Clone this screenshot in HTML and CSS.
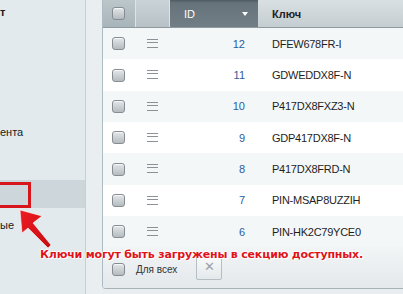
FILE: index.html
```html
<!DOCTYPE html>
<html lang="ru">
<head>
    <meta charset="UTF-8">
    <meta name="viewport" content="width=device-width, initial-scale=1.0">
    <title>Ключи</title>
    <link rel="stylesheet" href="styles.css">
</head>
<body>
    <div class="page">
        <aside class="sidebar">
            <ul class="menu">
                <li class="menu-item first"><b>т</b></li>
                <li class="menu-item"></li>
                <li class="menu-item"></li>
                <li class="menu-item"></li>
                <li class="menu-item">ента</li>
                <li class="menu-item"></li>
                <li class="menu-item active"></li>
                <li class="menu-item">ые</li>
            </ul>
        </aside>
        <div class="gutter"></div>

        <main class="grid">
            <div class="grid-head">
                <div class="col-check"><span class="checkbox"></span></div>
                <div class="col-drag"></div>
                <div class="col-id">ID <span class="sort"></span></div>
                <div class="col-key">Ключ</div>
            </div>

            <div class="grid-body">
                <div class="row odd">
                    <div class="col-check"><span class="checkbox"></span></div>
                    <div class="col-drag"><span class="handle"></span></div>
                    <div class="col-id">12</div>
                    <div class="col-key">DFEW678FR-I</div>
                </div>
                <div class="row">
                    <div class="col-check"><span class="checkbox"></span></div>
                    <div class="col-drag"><span class="handle"></span></div>
                    <div class="col-id">11</div>
                    <div class="col-key">GDWEDDX8F-N</div>
                </div>
                <div class="row odd">
                    <div class="col-check"><span class="checkbox"></span></div>
                    <div class="col-drag"><span class="handle"></span></div>
                    <div class="col-id">10</div>
                    <div class="col-key">P417DX8FXZ3-N</div>
                </div>
                <div class="row">
                    <div class="col-check"><span class="checkbox"></span></div>
                    <div class="col-drag"><span class="handle"></span></div>
                    <div class="col-id">9</div>
                    <div class="col-key">GDP417DX8F-N</div>
                </div>
                <div class="row odd">
                    <div class="col-check"><span class="checkbox"></span></div>
                    <div class="col-drag"><span class="handle"></span></div>
                    <div class="col-id">8</div>
                    <div class="col-key">P417DX8FRD-N</div>
                </div>
                <div class="row">
                    <div class="col-check"><span class="checkbox"></span></div>
                    <div class="col-drag"><span class="handle"></span></div>
                    <div class="col-id">7</div>
                    <div class="col-key">PIN-MSAP8UZZIH</div>
                </div>
                <div class="row odd">
                    <div class="col-check"><span class="checkbox"></span></div>
                    <div class="col-drag"><span class="handle"></span></div>
                    <div class="col-id">6</div>
                    <div class="col-key">PIN-HK2C79YCE0</div>
                </div>
            </div>

            <div class="grid-foot">
                <label class="all"><span class="checkbox"></span>Для всех</label>
                <button class="remove">&#x2715;</button>
            </div>
        </main>
    </div>

    <!-- annotation on top of the screenshot -->
    <div class="callout-box"></div>
    <svg class="callout-arrow" width="60" height="55" viewBox="0 0 60 55">
        <defs>
            <linearGradient id="redGrad" x1="0" y1="0" x2="1" y2="1">
                <stop offset="0" stop-color="#ee1b22"/>
                <stop offset="1" stop-color="#c40d12"/>
            </linearGradient>
        </defs>
        <polygon points="20,10 22,33 28,28 48,48 51,45 33,23 42,16" fill="url(#redGrad)" stroke="rgba(255,255,255,0.7)" stroke-width="0.8" stroke-linejoin="round"/>
    </svg>
    <div class="callout-text">Ключи могут быть загружены в секцию доступных.</div>
</body>
</html>
```

FILE: styles.css
```css
body {
    margin: 0;
    font-family: "Liberation Sans", Arial, sans-serif;
    font-size: 11px;
    color: #222;
    background: #e8eef0;
    overflow: hidden;
}

.page {
    display: flex;
    height: 294px;
}

/* left navigation */
.sidebar {
    width: 85px;
    background: #e2eaed;
    border-right: 1px solid #c4d0d5;
    overflow: hidden;
}

.menu {
    list-style: none;
    margin: 0;
    padding: 0;
}

.menu-item {
    height: 31px;
    line-height: 31px;
    white-space: nowrap;
    color: #1a1a1a;
}

.menu-item.first {
    height: 24px;
    line-height: 24px;
}

.menu-item.active {
    background: #cdd7db;
    height: 28px;
    margin: 1px 0 2px;
}

.gutter {
    width: 16px;
    background: #e9eff1;
}

/* keys grid */
.grid {
    flex: 1;
    display: flex;
    flex-direction: column;
    align-self: flex-start;
    border-left: 1px solid #aebbc1;
    border-bottom: 1px solid #a7b2b7;
    border-bottom-left-radius: 4px;
    background: #fff;
    overflow: hidden;
}

.grid-head {
    display: flex;
    height: 28px;
    border-bottom: 1px solid #8e9aa0;
    box-sizing: border-box;
}

.grid-head > div {
    display: flex;
    align-items: center;
    box-sizing: border-box;
}

.row {
    display: flex;
    height: calc(188px / 6);
    align-items: center;
    background: #fff;
}

.row.odd {
    background: #f4f7f8;
}

.col-check {
    width: 33px;
    padding-left: 9px;
    box-sizing: border-box;
    flex: none;
}

.col-drag {
    width: 34px;
    padding-left: 11px;
    box-sizing: border-box;
    flex: none;
}

.col-id {
    width: 88px;
    box-sizing: border-box;
    flex: none;
    text-align: right;
    padding-right: 13px;
    color: #2b5d9e;
}

.col-key {
    flex: 1;
    padding-left: 14px;
    letter-spacing: -0.25px;
    color: #1e1e1e;
}

.grid-head .col-check {
    background: linear-gradient(#bcc7cb, #a7b4b9);
    border-right: 1px solid #dde4e7;
}

.grid-head .col-drag {
    background: linear-gradient(#cad3d7, #b8c2c6);
    border-right: 1px solid #dde4e7;
}

.grid-head .col-id {
    background: linear-gradient(#4f5b61 0, #66737a 3px, #717e85 100%);
    color: #fff;
    justify-content: space-between;
    padding-left: 14px;
    padding-right: 10px;
    text-align: left;
}

.grid-head .col-key {
    background: linear-gradient(#d9e0e3, #c4cdd1);
    font-weight: bold;
    color: #222;
    letter-spacing: 0;
}

.sort {
    width: 0;
    height: 0;
    border-left: 3px solid transparent;
    border-right: 3px solid transparent;
    border-top: 4px solid #fff;
    margin-top: 1px;
}

.checkbox {
    display: inline-block;
    width: 13px;
    height: 13px;
    box-sizing: border-box;
    border: 1px solid #858d93;
    border-radius: 3px;
    background: linear-gradient(#e4e7e9, #b5bbbf);
    box-shadow: inset 0 1px 0 rgba(255, 255, 255, 0.7);
    vertical-align: middle;
}

.handle {
    display: block;
    width: 11px;
    height: 7px;
    border-top: 1px solid #8b9196;
    border-bottom: 1px solid #8b9196;
    background: linear-gradient(transparent 2px, #8b9196 2px, #8b9196 3px, transparent 3px);
}

.grid-foot {
    display: flex;
    align-items: flex-start;
    height: 41px;
    background: linear-gradient(#f2f5f6, #e3e8eb);
}

.all {
    display: flex;
    align-items: center;
    margin: 16px 0 0 9px;
    font-size: 10px;
    color: #333;
}

.all .checkbox {
    margin-right: 11px;
}

.remove {
    width: 26px;
    height: 27px;
    margin: 6px 0 0 19px;
    padding: 0;
    border: 1px solid #b5bec3;
    border-radius: 2px;
    background: linear-gradient(#fbfcfc, #e4e9eb);
    color: #9aa1a6;
    font-size: 13px;
    font-weight: bold;
    font-family: "DejaVu Sans", sans-serif;
}

/* annotation */
.callout-box {
    position: absolute;
    left: -3px;
    top: 182px;
    width: 34px;
    height: 26px;
    box-sizing: border-box;
    border: 3px solid #d6151c;
}

.callout-arrow {
    position: absolute;
    left: 0;
    top: 200px;
}

.callout-text {
    position: absolute;
    left: 40px;
    top: 248px;
    font-family: "DejaVu Sans", Verdana, sans-serif;
    font-weight: bold;
    font-size: 11px;
    letter-spacing: -0.18px;
    color: #e0121a;
    white-space: nowrap;
    text-shadow: 1px 1px 0 #fff, -1px 0 1px #fff, 0 -1px 1px #fff, 1px 0 1px #fff;
}
```
